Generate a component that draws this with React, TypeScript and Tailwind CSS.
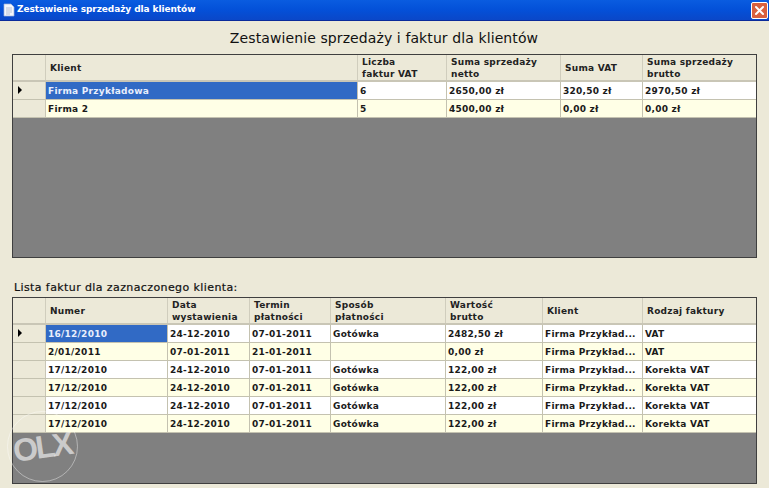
const topCols = "grid grid-cols-[33px_312px_89px_114px_82px_1fr]";
const bottomCols = "grid grid-cols-[33px_122px_82px_81px_115px_97px_100px_1fr]";

const topHead = ["Klient", "Liczba\nfaktur VAT", "Suma sprzedaży\nnetto", "Suma VAT", "Suma sprzedaży\nbrutto"];
const topRows = [
  ["Firma Przykładowa", "6", "2650,00 zł", "320,50 zł", "2970,50 zł"],
  ["Firma 2", "5", "4500,00 zł", "0,00 zł", "0,00 zł"],
];

const bottomHead = ["Numer", "Data\nwystawienia", "Termin\npłatności", "Sposób\npłatności", "Wartość\nbrutto", "Klient", "Rodzaj faktury"];
const bottomRows = [
  ["16/12/2010", "24-12-2010", "07-01-2011", "Gotówka", "2482,50 zł", "Firma Przykład...", "VAT"],
  ["2/01/2011", "07-01-2011", "21-01-2011", "", "0,00 zł", "Firma Przykład...", "VAT"],
  ["17/12/2010", "24-12-2010", "07-01-2011", "Gotówka", "122,00 zł", "Firma Przykład...", "Korekta VAT"],
  ["17/12/2010", "24-12-2010", "07-01-2011", "Gotówka", "122,00 zł", "Firma Przykład...", "Korekta VAT"],
  ["17/12/2010", "24-12-2010", "07-01-2011", "Gotówka", "122,00 zł", "Firma Przykład...", "Korekta VAT"],
  ["17/12/2010", "24-12-2010", "07-01-2011", "Gotówka", "122,00 zł", "Firma Przykład...", "Korekta VAT"],
];

function DataGrid({ cols, head, rows, height }: { cols: string; head: string[]; rows: string[][]; height: string }) {
  return (
    <div className={`mx-3 border border-[#3f3f3f] bg-[#808080] ${height}`}>
      <div className={`${cols} h-[27px] bg-[#ece9d8] border-b-2 border-[#c9c6b6]`}>
        <div className="border-r border-[#d0cdbd]" />
        {head.map((h, i) => (
          <div key={i} className="flex items-center whitespace-pre-line pl-1 pt-[2px] leading-[11.5px] border-r border-[#d0cdbd] last:border-r-0 font-semibold text-[#222]">
            {h}
          </div>
        ))}
      </div>
      {rows.map((row, r) => (
        <div key={r} className={`${cols} h-[18px] border-b border-[#c4c2b0] ${r % 2 ? "bg-[#ffffe6]" : "bg-white"}`}>
          <div className="relative bg-[#ece9d8] border-r border-[#c9c6b6]">
            {r === 0 && <div className="absolute left-[5px] top-[4px] h-0 w-0 border-y-[4px] border-l-[4px] border-y-transparent border-l-black" />}
          </div>
          {row.map((c, i) => (
            <div
              key={i}
              className={`flex items-center overflow-hidden whitespace-nowrap pl-[2px] pt-[2px] font-bold border-r border-[#c4c2b0] last:border-r-0 ${r === 0 && i === 0 ? "bg-[#316ac5] text-[#e8eefc]" : "text-[#1a1a1a]"}`}
            >
              {c}
            </div>
          ))}
        </div>
      ))}
    </div>
  );
}

export default function App() {
  return (
    <div className="relative h-[488px] w-[769px] overflow-hidden bg-[#ece9d8] font-['DejaVu_Sans',sans-serif] text-[9px] tracking-[0.25px]">
      <div className="flex h-[21px] items-center justify-between border-b border-[#0a2a9a] bg-gradient-to-b from-[#0a5ce0] via-[#0450d8] to-[#0a47c8] pl-[3px] pr-[1px]">
        <div className="flex items-center gap-[2px]">
          <svg width="12" height="14" viewBox="0 0 12 14">
            <path d="M1 1h7l3 3v9H1z" fill="#f4f6fb" stroke="#9fb2d8" strokeWidth="0.7" />
            <path d="M3 5h6M3 7h6M3 9h6M3 11h4" stroke="#a8b4cc" strokeWidth="0.8" />
          </svg>
          <span className="text-[9px] font-bold tracking-[-0.08px] text-white">Zestawienie sprzedaży dla klientów</span>
        </div>
        <div className="flex h-[17px] w-[17px] items-center justify-center rounded-[2px] border border-white bg-[#d9603f]">
          <svg width="11" height="11" viewBox="0 0 11 11">
            <path d="M2 2l7 7M9 2l-7 7" stroke="#fff" strokeWidth="2" strokeLinecap="round" />
          </svg>
        </div>
      </div>

      <h1 className="flex h-[33px] items-center justify-center pr-[1px] pt-[2px] text-[14px] font-normal tracking-[0.1px] text-[#111]">
        Zestawienie sprzedaży i faktur dla klientów
      </h1>
      <DataGrid cols={topCols} head={topHead} rows={topRows} height="h-[204px]" />

      <p className="ml-[14px] mt-[23px] h-[16px] text-[11px] font-normal leading-[13px] tracking-[0.4px] text-[#111] [-webkit-text-stroke:0.2px_#111]">
        Lista faktur dla zaznaczonego klienta:
      </p>
      <DataGrid cols={bottomCols} head={bottomHead} rows={bottomRows} height="h-[187px]" />

      <div className="pointer-events-none absolute left-[7px] top-[411px] flex h-[71px] w-[71px] items-center justify-center rounded-full border border-white/40">
        <span className="-rotate-[8deg] text-[32px] font-bold leading-[20px] tracking-[-2.5px] text-white/60 font-['Liberation_Sans',sans-serif]">OLX</span>
      </div>
    </div>
  );
}
